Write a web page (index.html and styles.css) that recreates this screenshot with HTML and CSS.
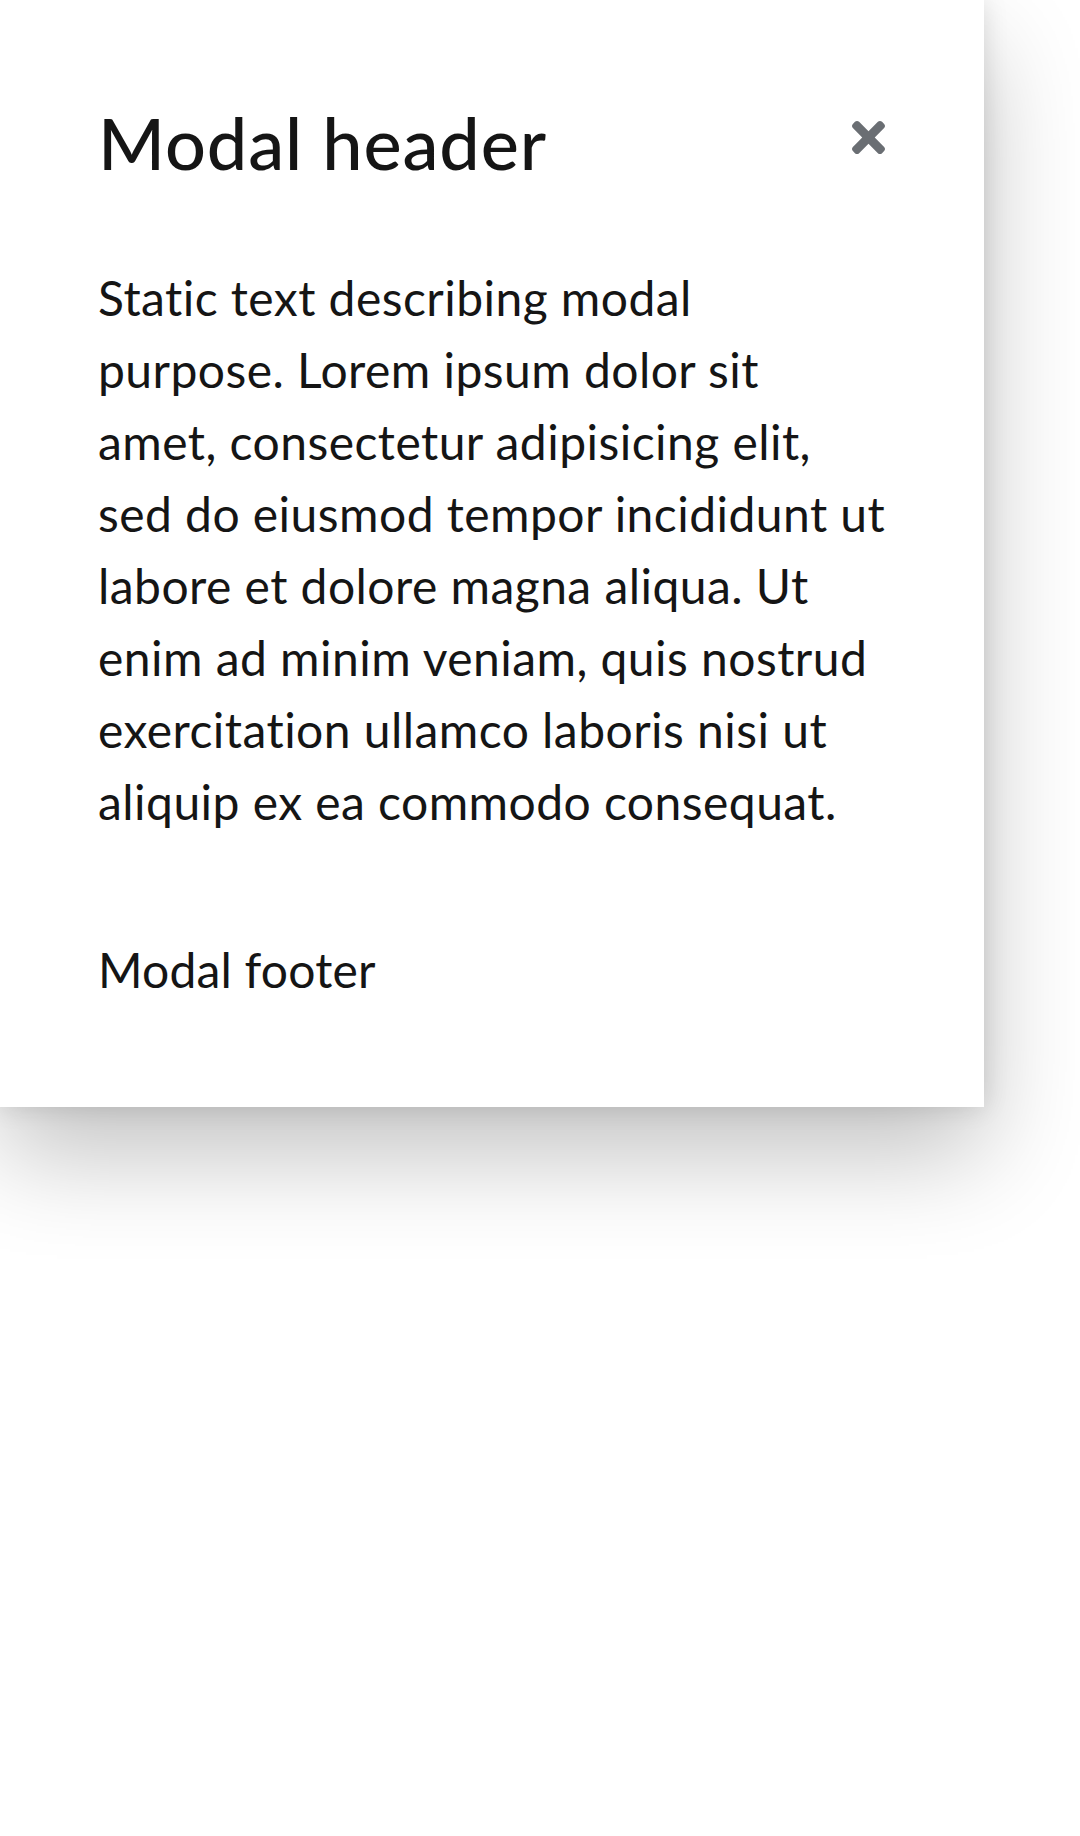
FILE: index.html
```html
<!DOCTYPE html>
<html lang="en">
<head>
<meta charset="utf-8">
<title>Modal</title>
<link rel="stylesheet" href="styles.css">
</head>
<body>
<div class="modal" role="dialog" aria-labelledby="modal-title">
  <header class="modal-header">
    <h1 class="modal-title" id="modal-title">Modal header</h1>
    <button class="modal-close" aria-label="Close">
      <svg viewBox="0 80 352 352" width="33" height="33" aria-hidden="true"><path fill="#6a6e73" d="M242.72 256l100.07-100.07c12.28-12.28 12.28-32.19 0-44.48l-22.24-22.240c-12.28-12.28-32.19-12.28-44.48 0L176 189.28 75.93 89.21c-12.28-12.28-32.19-12.28-44.48 0L9.21 111.45c-12.28 12.28-12.28 32.19 0 44.48L109.28 256 9.21 356.07c-12.28 12.28-12.28 32.19 0 44.48l22.24 22.24c12.28 12.28 32.2 12.28 44.48 0L176 322.72l100.07 100.07c12.28 12.28 32.2 12.28 44.48 0l22.24-22.24c12.28-12.28 12.28-32.19 0-44.48L242.72 256z"/></svg>
    </button>
  </header>
  <div class="modal-body">Static text describing modal<br>purpose. Lorem ipsum dolor sit<br>amet, consectetur adipisicing elit,<br>sed do eiusmod tempor incididunt ut<br>labore et dolore magna aliqua. Ut<br>enim ad minim veniam, quis nostrud<br>exercitation ullamco laboris nisi ut<br>aliquip ex ea commodo consequat.</div>
  <footer class="modal-footer">Modal footer</footer>
</div>
</body>
</html>
```
FILE: styles.css
```css
html, body {
  margin: 0;
  padding: 0;
  background: #ffffff;
}
body {
  width: 1080px;
  height: 1836px;
  overflow: hidden;
  font-family: "Lato", "Open Sans", "Liberation Sans", sans-serif;
  font-variant-ligatures: none;
  color: #151515;
}
.modal {
  width: 984px;
  height: 1107px;
  box-sizing: border-box;
  background: #ffffff;
  padding: 95px 99px 0 98px;
  box-shadow: 0 48px 96px 0 rgba(3, 3, 3, 0.24), 0 0 24px 0 rgba(3, 3, 3, 0.12);
}
.modal-header {
  display: flex;
  justify-content: space-between;
  align-items: flex-start;
}
.modal-title {
  margin: 0;
  font-size: 72px;
  font-weight: 500;
  line-height: 94px;
  letter-spacing: 0.9px;
}
.modal-close {
  border: 0;
  padding: 0;
  margin-top: 26px;
  background: none;
  display: block;
  line-height: 0;
}
.modal-body {
  margin-top: 73px;
  font-size: 48px;
  line-height: 72px;
  letter-spacing: 0.45px;
  white-space: nowrap;
}
.modal-footer {
  margin-top: 96px;
  font-size: 48px;
  line-height: 72px;
  letter-spacing: 0.2px;
}
```
